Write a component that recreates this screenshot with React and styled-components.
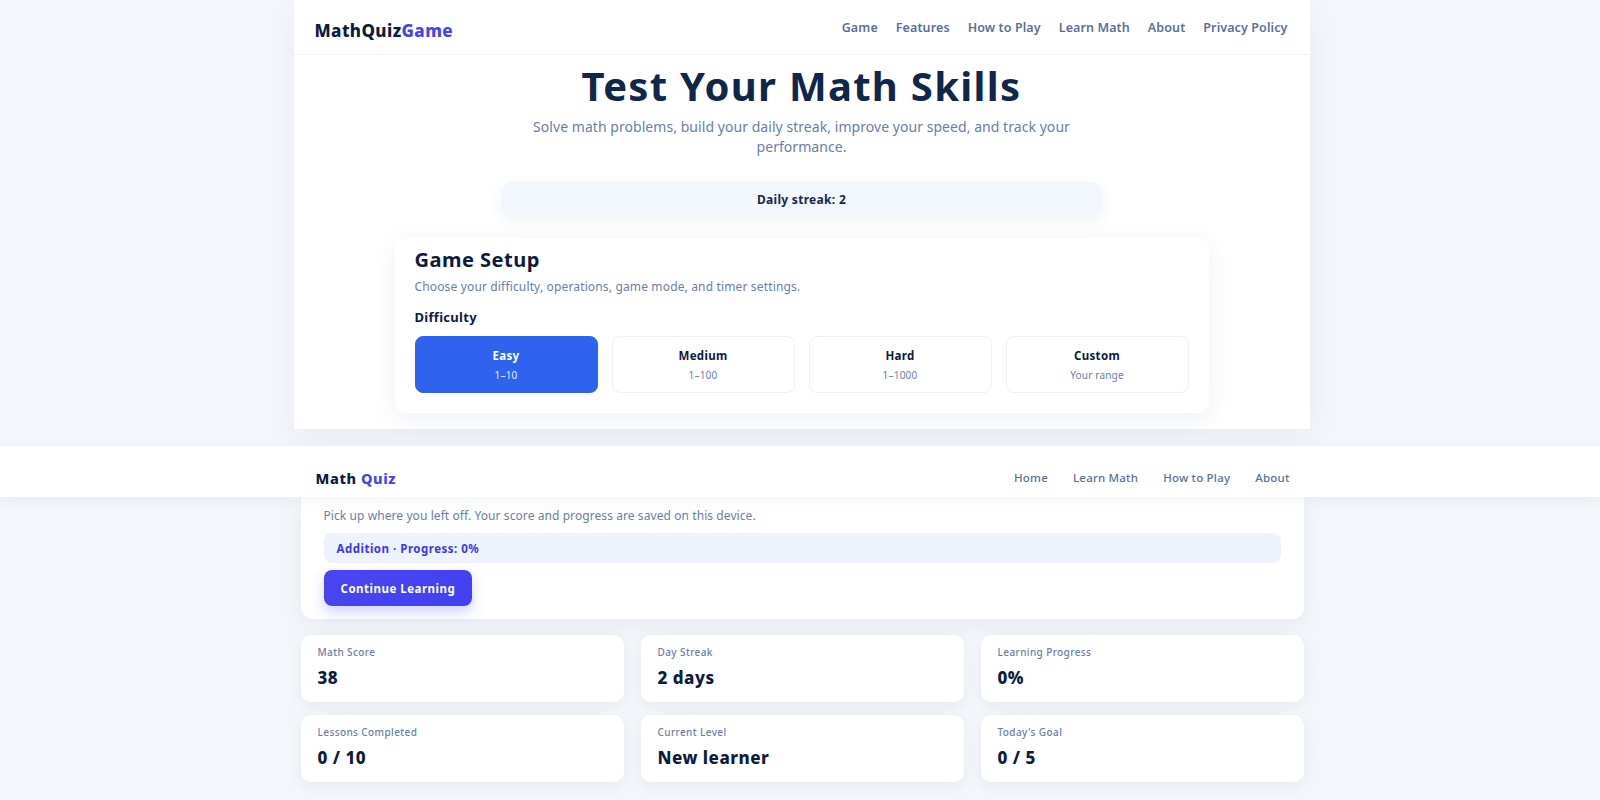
import styled, { createGlobalStyle } from "styled-components";

const GlobalStyle = createGlobalStyle`
  * { box-sizing: border-box; }
  body {
    margin: 0;
    background: #f3f6fa;
    font-family: "Noto Sans", "Open Sans", sans-serif;
    color: #0f1f3f;
  }
`;

const difficulties = [
  { name: "Easy", range: "1–10", active: true },
  { name: "Medium", range: "1–100" },
  { name: "Hard", range: "1–1000" },
  { name: "Custom", range: "Your range" },
];

const stats = [
  { label: "Math Score", value: "38" },
  { label: "Day Streak", value: "2 days" },
  { label: "Learning Progress", value: "0%" },
  { label: "Lessons Completed", value: "0 / 10" },
  { label: "Current Level", value: "New learner" },
  { label: "Today's Goal", value: "0 / 5" },
];

export default function App() {
  return (
    <>
      <GlobalStyle />
      <Page>
        <GameSection>
          <Panel>
            <Header>
              <Logo>
                MathQuiz<span>Game</span>
              </Logo>
              <Nav>
                <a>Game</a>
                <a>Features</a>
                <a>How to Play</a>
                <a>Learn Math</a>
                <a>About</a>
                <a>Privacy Policy</a>
              </Nav>
            </Header>
            <Hero>
              <Title>Test Your Math Skills</Title>
              <Lead>
                Solve math problems, build your daily streak, improve your speed, and track your
                performance.
              </Lead>
              <Streak>Daily streak: 2</Streak>
              <SetupCard>
                <SetupTitle>Game Setup</SetupTitle>
                <SetupText>Choose your difficulty, operations, game mode, and timer settings.</SetupText>
                <SetupLabel>Difficulty</SetupLabel>
                <DifficultyRow>
                  {difficulties.map(d => (
                    <DifficultyButton key={d.name} $active={d.active}>
                      <strong>{d.name}</strong>
                      <span>{d.range}</span>
                    </DifficultyButton>
                  ))}
                </DifficultyRow>
              </SetupCard>
            </Hero>
          </Panel>
        </GameSection>

        <LearnSection>
          <TopBar>
            <BarInner>
              <SmallLogo>
                Math <span>Quiz</span>
              </SmallLogo>
              <SmallNav>
                <a>Home</a>
                <a>Learn Math</a>
                <a>How to Play</a>
                <a>About</a>
              </SmallNav>
            </BarInner>
          </TopBar>
          <Container>
            <ResumeCard>
              <ResumeText>Pick up where you left off. Your score and progress are saved on this device.</ResumeText>
              <ProgressStrip>Addition · Progress: 0%</ProgressStrip>
              <ContinueButton>Continue Learning</ContinueButton>
            </ResumeCard>
            <StatsGrid>
              {stats.map(s => (
                <StatCard key={s.label}>
                  <StatLabel>{s.label}</StatLabel>
                  <StatValue>{s.value}</StatValue>
                </StatCard>
              ))}
            </StatsGrid>
          </Container>
        </LearnSection>
      </Page>
    </>
  );
}

const Page = styled.div`
  display: flex;
  flex-direction: column;
  min-height: 800px;
`;

const GameSection = styled.section`
  display: flex;
  justify-content: center;
  padding-left: 3px;
`;

const Panel = styled.div`
  width: 1016px;
  height: 429px;
  background: #ffffff;
  box-shadow: 0 10px 30px rgba(40, 70, 120, 0.05);
`;

const Header = styled.header`
  height: 55px;
  padding: 0 22px 0 21px;
  display: flex;
  align-items: center;
  justify-content: space-between;
  border-bottom: 1px solid #eef1f6;
`;

const Logo = styled.div`
  font-size: 17px;
  font-weight: 800;
  letter-spacing: 0.4px;
  color: #0d1b3e;
  margin-top: 6px;

  span {
    color: #4343f2;
  }
`;

const Nav = styled.nav`
  display: flex;
  gap: 18px;

  a {
    font-size: 12.5px;
    font-weight: 600;
    letter-spacing: 0.1px;
    color: #5a7196;
  }
`;

const Hero = styled.div`
  display: flex;
  flex-direction: column;
  align-items: center;
`;

const Title = styled.h1`
  margin: 9px 0 0;
  font-size: 40px;
  line-height: 44px;
  font-weight: 700;
  letter-spacing: 1.3px;
  color: #10264a;
`;

const Lead = styled.p`
  margin: 9px 0 0;
  max-width: 580px;
  text-align: center;
  font-size: 14px;
  line-height: 20px;
  letter-spacing: 0.05px;
  color: #6a80a3;
`;

const Streak = styled.div`
  margin-top: 25px;
  width: 600px;
  height: 34px;
  display: flex;
  align-items: center;
  justify-content: center;
  background: #f2f7fd;
  border-radius: 10px;
  box-shadow: 0 4px 16px rgba(40, 80, 140, 0.08);
  font-size: 12px;
  font-weight: 700;
  letter-spacing: 0.3px;
  color: #1a2748;
`;

const SetupCard = styled.div`
  margin-top: 22px;
  width: 814px;
  padding: 9px 20px 20px;
  background: #ffffff;
  border-radius: 12px;
  box-shadow: 0 6px 24px rgba(40, 70, 120, 0.08);
`;

const SetupTitle = styled.h2`
  margin: 0;
  font-size: 20px;
  line-height: 26px;
  font-weight: 700;
  letter-spacing: 0.5px;
  color: #0d1b3e;
`;

const SetupText = styled.p`
  margin: 6px 0 0;
  font-size: 12px;
  line-height: 16px;
  letter-spacing: 0.15px;
  color: #6a80a3;
`;

const SetupLabel = styled.h3`
  margin: 14px 0 0;
  font-size: 13px;
  line-height: 16px;
  font-weight: 700;
  letter-spacing: 0.3px;
  color: #0d1b3e;
`;

const DifficultyRow = styled.div`
  margin-top: 11px;
  display: grid;
  grid-template-columns: repeat(4, 1fr);
  gap: 14px;
`;

const DifficultyButton = styled.div`
  height: 57px;
  border-radius: 8px;
  display: flex;
  flex-direction: column;
  align-items: center;
  justify-content: center;
  gap: 5px;
  background: ${p => (p.$active ? "#2f62ef" : "#ffffff")};
  border: 1px solid ${p => (p.$active ? "#2f62ef" : "#edf0f5")};

  strong {
    font-size: 11.5px;
    font-weight: 700;
    letter-spacing: 0.3px;
    color: ${p => (p.$active ? "#ffffff" : "#0d1b3e")};
  }

  span {
    font-size: 10px;
    letter-spacing: 0.2px;
    color: ${p => (p.$active ? "#e6edff" : "#6a80a3")};
  }
`;

const LearnSection = styled.section`
  margin-top: 17px;
  display: flex;
  flex-direction: column;
`;

const TopBar = styled.div`
  height: 51px;
  background: #ffffff;
  box-shadow: 0 4px 14px rgba(40, 70, 120, 0.05);
  position: relative;
  z-index: 1;
`;

const BarInner = styled.div`
  width: 1003px;
  height: 100%;
  margin: 0 auto;
  padding: 0 14px 0 15px;
  display: flex;
  align-items: center;
  justify-content: space-between;
  transform: translateX(2px);
`;

const SmallLogo = styled.div`
  margin-top: 12px;
  font-size: 14.5px;
  font-weight: 800;
  letter-spacing: 0.6px;
  color: #0d1b3e;

  span {
    color: #4343f2;
  }
`;

const SmallNav = styled.nav`
  margin-top: 12px;
  display: flex;
  gap: 25px;

  a {
    font-size: 11.5px;
    font-weight: 500;
    letter-spacing: 0.2px;
    color: #5a7196;
  }
`;

const Container = styled.div`
  width: 1003px;
  margin: 0 auto;
  position: relative;
  left: 2px;
`;

const ResumeCard = styled.div`
  padding: 11px 23px 13px;
  background: #ffffff;
  border-radius: 0 0 12px 12px;
  box-shadow: 0 6px 22px rgba(40, 70, 120, 0.06);
`;

const ResumeText = styled.p`
  margin: 0;
  font-size: 12px;
  line-height: 16px;
  letter-spacing: 0.08px;
  color: #6a80a3;
`;

const ProgressStrip = styled.div`
  margin-top: 9px;
  height: 30px;
  padding: 0 13px;
  display: flex;
  align-items: center;
  background: #eef2fd;
  border-radius: 8px;
  font-size: 11.5px;
  font-weight: 700;
  letter-spacing: 0.5px;
  color: #3a3ae8;
`;

const ContinueButton = styled.button`
  margin-top: 7px;
  height: 36px;
  padding: 0 17px;
  border: none;
  border-radius: 8px;
  background: linear-gradient(135deg, #4a45f2, #4240f0);
  box-shadow: 0 6px 14px rgba(70, 70, 240, 0.25);
  font-family: inherit;
  font-size: 11.5px;
  font-weight: 700;
  letter-spacing: 0.5px;
  color: #ffffff;
`;

const StatsGrid = styled.div`
  margin-top: 16px;
  display: grid;
  grid-template-columns: repeat(3, 1fr);
  column-gap: 17px;
  row-gap: 13px;
`;

const StatCard = styled.div`
  height: 67px;
  padding: 10px 17px;
  background: #ffffff;
  border-radius: 10px;
  box-shadow: 0 4px 16px rgba(40, 70, 120, 0.06);
`;

const StatLabel = styled.div`
  font-size: 10px;
  line-height: 14px;
  font-weight: 500;
  letter-spacing: 0.4px;
  color: #6a80a3;
`;

const StatValue = styled.div`
  margin-top: 8px;
  font-size: 17px;
  line-height: 22px;
  font-weight: 800;
  letter-spacing: 0.5px;
  color: #0d1b3e;
`;
